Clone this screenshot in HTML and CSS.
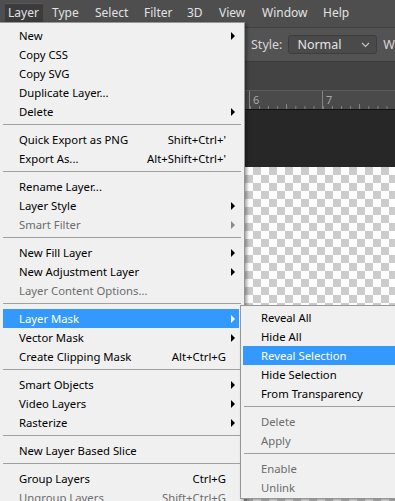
FILE: index.html
```html
<!DOCTYPE html>
<html lang="en">
<head>
    <meta charset="UTF-8">
    <meta name="viewport" content="width=device-width, initial-scale=1.0">
    <title>Layer menu</title>
    <link rel="stylesheet" href="styles.css">
</head>
<body>
    <div class="app">
        <div class="menubar">
            <span class="top-item open">Layer</span>
            <span class="top-item">Type</span>
            <span class="top-item">Select</span>
            <span class="top-item">Filter</span>
            <span class="top-item">3D</span>
            <span class="top-item">View</span>
            <span class="top-item">Window</span>
            <span class="top-item">Help</span>
        </div>

        <div class="options">
            <span class="opt-label">Style:</span>
            <div class="select">
                <span>Normal</span>
                <svg width="9" height="6" viewBox="0 0 9 6"><path d="M1 1 L4.5 4.5 L8 1" fill="none" stroke="#c8c8c8" stroke-width="1.1"/></svg>
            </div>
            <span class="opt-label">W</span>
        </div>

        <div class="tabs"></div>

        <div class="ruler">
            <div class="unit"><span>6</span><i class="half"></i></div>
            <div class="unit"><span>7</span><i class="half"></i></div>
        </div>

        <div class="pasteboard"></div>
        <div class="canvas"></div>
    </div>

    <div class="menu main-menu">
        <div class="item sub">New</div>
        <div class="item">Copy CSS</div>
        <div class="item">Copy SVG</div>
        <div class="item">Duplicate Layer...</div>
        <div class="item sub">Delete</div>
        <div class="sep"></div>
        <div class="item">Quick Export as PNG<span class="key">Shift+Ctrl+'</span></div>
        <div class="item">Export As...<span class="key">Alt+Shift+Ctrl+'</span></div>
        <div class="sep"></div>
        <div class="item">Rename Layer...</div>
        <div class="item sub">Layer Style</div>
        <div class="item sub disabled">Smart Filter</div>
        <div class="sep"></div>
        <div class="item sub">New Fill Layer</div>
        <div class="item sub">New Adjustment Layer</div>
        <div class="item disabled">Layer Content Options...</div>
        <div class="sep"></div>
        <div class="item sub active">Layer Mask</div>
        <div class="item sub">Vector Mask</div>
        <div class="item">Create Clipping Mask<span class="key">Alt+Ctrl+G</span></div>
        <div class="sep"></div>
        <div class="item sub">Smart Objects</div>
        <div class="item sub">Video Layers</div>
        <div class="item sub">Rasterize</div>
        <div class="sep"></div>
        <div class="item">New Layer Based Slice</div>
        <div class="sep"></div>
        <div class="item">Group Layers<span class="key">Ctrl+G</span></div>
        <div class="item disabled">Ungroup Layers<span class="key">Shift+Ctrl+G</span></div>
    </div>

    <div class="menu sub-menu">
        <div class="item">Reveal All</div>
        <div class="item">Hide All</div>
        <div class="item active">Reveal Selection</div>
        <div class="item">Hide Selection</div>
        <div class="item">From Transparency</div>
        <div class="sep"></div>
        <div class="item disabled">Delete</div>
        <div class="item disabled">Apply</div>
        <div class="sep"></div>
        <div class="item disabled">Enable</div>
        <div class="item disabled">Unlink</div>
    </div>
</body>
</html>
```

FILE: styles.css
```css
body {
    margin: 0;
    width: 395px;
    height: 501px;
    overflow: hidden;
    position: relative;
    font-family: "Noto Sans", "Open Sans", sans-serif;
    font-size: 12px;
    background: #282828;
}
.app {
    display: flex;
    flex-direction: column;
    height: 501px;
}
.menubar {
    height: 28px;
    background: #4e4e4e;
    border-bottom: 1px solid #404040;
    box-sizing: border-box;
    display: grid;
    grid-template-columns: 44px 43px 49px 43px 32px 43px 61px auto;
    padding-left: 5px;
    color: #e2e2e2;
}
.top-item {
    padding: 0 0 0 3px;
    height: 19px;
    margin-top: 3px;
    line-height: 19px;
}
.top-item.open {
    width: 38px;
    box-sizing: border-box;
    background: #3b3b3b;
    border-top: 1px solid #5a5a5a;
    line-height: 18px;
}
.options {
    height: 33px;
    background: #535353;
    display: flex;
    align-items: center;
    padding-left: 251px;
    gap: 6px;
    color: #d6d6d6;
    font-size: 12.5px;
    white-space: nowrap;
}
.select {
    width: 92px;
    height: 19px;
    box-sizing: border-box;
    border: 1px solid #3d3d3d;
    border-radius: 3px;
    background: #4a4a4a;
    display: flex;
    align-items: center;
    justify-content: space-between;
    padding: 0 6px 0 8px;
    color: #e4e4e4;
}
.tabs {
    height: 29px;
    background: #434343;
    border-top: 1px solid #3a3a3a;
    box-sizing: border-box;
}
.ruler {
    height: 20px;
    background: #4a4a4a;
    border-top: 1px solid #5c5c5c;
    border-bottom: 1px solid #111;
    box-sizing: border-box;
    display: flex;
    padding-left: 249px;
}
.unit {
    width: 73px;
    flex: none;
    position: relative;
    border-left: 1px solid #858585;
    box-sizing: border-box;
    background: linear-gradient(to right, #858585 1px, transparent 1px) 9px 100% / 9.1px 3px repeat-x;
}
.unit span {
    position: absolute;
    left: 3px;
    top: 1px;
    font-size: 11px;
    color: #a8a8a8;
}
.half {
    position: absolute;
    left: 36px;
    bottom: 0;
    width: 1px;
    height: 5px;
    background: #858585;
}
.pasteboard {
    height: 57px;
    background: #272727;
}
.canvas {
    flex: 1;
    background-color: #fff;
    background-image: conic-gradient(#cccccc 25%, #fff 0 50%, #cccccc 0 75%, #fff 0);
    background-size: 16px 16px;
    background-position: 245px 0;
}
.menu {
    position: absolute;
    background: #f0f0f0;
    border: 1px solid #979797;
    box-sizing: border-box;
    color: #000;
    font-size: 11.3px;
    box-shadow: 2px 2px 3px rgba(0, 0, 0, 0.35);
}
.main-menu {
    left: -1px;
    top: 22px;
    width: 246px;
    padding: 3px 5px 3px 3px;
}
.sub-menu {
    left: 240px;
    top: 305px;
    width: 170px;
    height: 194px;
    padding: 2px 0 2px 1px;
}
.item {
    height: 19px;
    display: flex;
    align-items: center;
    padding: 0 13px 0 16px;
    position: relative;
    white-space: nowrap;
}
.sub-menu .item {
    padding-left: 18px;
    margin-left: 1px;
}
.key {
    margin-left: auto;
}
.item.sub::after {
    content: "";
    position: absolute;
    left: 228px;
    top: 6px;
    border-left: 4px solid #000;
    border-top: 4px solid transparent;
    border-bottom: 4px solid transparent;
}
.item.disabled {
    color: #6d6d6d;
}
.item.disabled.sub::after {
    border-left-color: #8a8a8a;
}
.item.active {
    background: #3399ff;
    color: #fff;
}
.item.active.sub::after {
    border-left-color: #fff;
}
.sep {
    height: 1px;
    background: #a0a0a0;
    margin: 3px -2px 5px 0;
}
.sub-menu .sep {
    margin: 3px 0 5px 2px;
}
```
